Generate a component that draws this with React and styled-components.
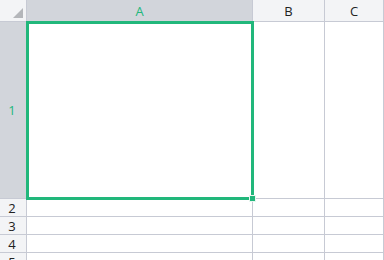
import React from "react";
import styled, { createGlobalStyle } from "styled-components";

const GlobalStyle = createGlobalStyle`
  html, body {
    margin: 0;
    padding: 0;
    background: #ffffff;
    overflow: hidden;
  }
`;

const ACCENT = "#21b77b";
const LINE = "#c7cad4";

const Sheet = styled.div`
  display: grid;
  grid-template-columns: 27px 226px 72px 1fr;
  grid-template-rows: 22px 177px repeat(4, 18px);
  width: 384px;
  height: 260px;
  overflow: hidden;
  font-family: "Open Sans", "Noto Sans", sans-serif;
  font-size: 13px;
  color: #222;
`;

const Corner = styled.div`
  position: relative;
  background: #f3f4f6;
  border-right: 1px solid ${LINE};
  border-bottom: 1px solid ${LINE};
  &::after {
    content: "";
    position: absolute;
    right: 3px;
    bottom: 3px;
    width: 0;
    height: 0;
    border-left: 10px solid transparent;
    border-bottom: 10px solid #b4b6ba;
  }
`;

const Head = styled.div`
  display: flex;
  align-items: center;
  justify-content: center;
  background: ${(p) => (p.$active ? "#d2d5db" : "#f3f4f6")};
  color: ${(p) => (p.$active ? ACCENT : "#222")};
  border-right: 1px solid ${LINE};
  border-bottom: 1px solid ${LINE};
  padding-top: ${(p) => (p.$col ? "1px" : "0")};
  padding-right: ${(p) => (p.$col ? "0" : "2px")};
`;

const Cell = styled.div`
  position: relative;
  background: #fff;
  border-right: 1px solid ${LINE};
  border-bottom: 1px solid ${LINE};
`;

// selection frame drawn over the active cell
const Selection = styled.div`
  position: absolute;
  left: -1px;
  top: -1px;
  right: -2px;
  bottom: -2px;
  border: 3px solid ${ACCENT};
  pointer-events: none;
  z-index: 2;
`;

const FillHandle = styled.div`
  position: absolute;
  right: -5px;
  bottom: -5px;
  width: 5px;
  height: 5px;
  background: ${ACCENT};
  border: 1px solid #e8f7f0;
`;

const columns = ["A", "B", "C"];
const rows = [1, 2, 3, 4, 5];

export default function App() {
  return (
    <>
      <GlobalStyle />
      <Sheet>
        <Corner />
        {columns.map((c) => (
          <Head key={c} $col $active={c === "A"}>
            {c}
          </Head>
        ))}
        {rows.map((r) => (
          <React.Fragment key={r}>
            <Head $active={r === 1}>{r}</Head>
            {columns.map((c) => (
              <Cell key={c}>
                {r === 1 && c === "A" && (
                  <Selection>
                    <FillHandle />
                  </Selection>
                )}
              </Cell>
            ))}
          </React.Fragment>
        ))}
      </Sheet>
    </>
  );
}
